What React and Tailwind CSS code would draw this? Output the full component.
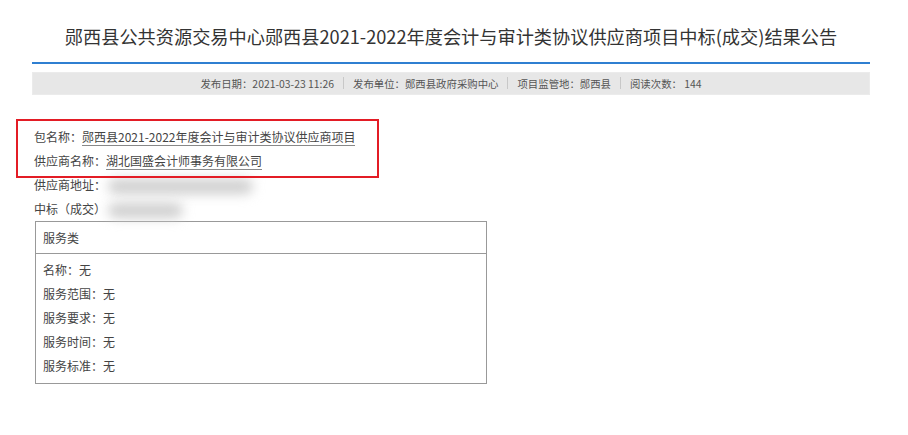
// 公告详情页：标题 + 元信息条 + 中标信息 + 服务类表格
const FONT = { fontFamily: '"Microsoft YaHei", "Noto Sans CJK SC", "Noto Sans", sans-serif' }

const metas = [
  '发布日期：2021-03-23 11:26',
  '发布单位：郧西县政府采购中心',
  '项目监管地：郧西县',
  '阅读次数： 144',
]

const services = ['名称：无', '服务范围：无', '服务要求：无', '服务时间：无', '服务标准：无']

function Blurred({ w }) {
  return (
    <span className="relative ml-[2px] inline-block h-[15px] align-middle">
      <span className={`block h-full ${w} rounded-full bg-[#cfcfcf] blur-[6px]`} />
    </span>
  )
}

export default function App() {
  return (
    <div className="min-h-[435px] w-[908px] bg-white" style={FONT}>
      <div className="mx-[32px] w-[838px]">
        <h1 className="pt-[24px] pb-[14px] text-center text-[18.2px] leading-[24px] text-[#333]">
          郧西县公共资源交易中心郧西县2021-2022年度会计与审计类协议供应商项目中标(成交)结果公告
        </h1>
        <div className="h-[2px] bg-[#2f7fd1]" />
        <div className="mt-[8px] flex h-[23px] items-center justify-center border border-[#ebebeb] bg-[#e7e7e7] text-[10.4px] text-[#555]">
          {metas.map((m, i) => (
            <span key={m} className="flex items-center">
              {i > 0 && <span className="mx-[9px] h-[12px] w-px bg-[#c8c8c8]" />}
              <span>{m}</span>
            </span>
          ))}
        </div>

        <div className="relative mt-[30px] text-[12px] leading-[24px] text-[#444]">
          <div className="pl-[2px]">
            <div>
              包名称：
              <span className="border-b border-[#888]">郧西县2021-2022年度会计与审计类协议供应商项目</span>
            </div>
            <div>
              供应商名称：
              <span className="border-b border-[#888]">湖北国盛会计师事务有限公司</span>
            </div>
            <div>
              供应商地址：
              <Blurred w="w-[145px]" />
            </div>
            <div>
              中标（成交）
              <Blurred w="w-[75px]" />
            </div>
          </div>

          <div className="ml-[3px] w-[452px] border border-[#999]">
            <div className="flex h-[32px] items-center border-b border-[#999] px-[7px]">服务类</div>
            <div className="px-[7px] pt-[4px] pb-[5px]">
              {services.map((s) => (
                <div key={s}>{s}</div>
              ))}
            </div>
          </div>

          <div className="pointer-events-none absolute left-[-16px] top-[-6px] h-[59px] w-[363px] border-2 border-[#e31c25]" />
        </div>
      </div>
    </div>
  )
}
